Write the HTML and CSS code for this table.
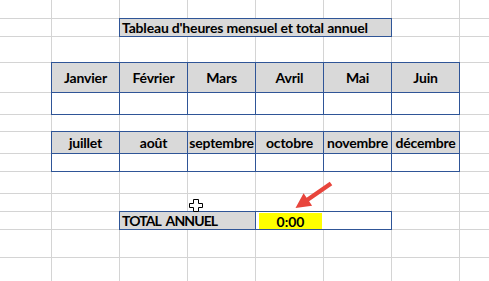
FILE: index.html
```html
<!DOCTYPE html>
<html lang="fr">
<head>
<meta charset="utf-8">
<title>Tableau d'heures</title>
<link rel="stylesheet" href="styles.css">
</head>
<body>
<div class="sheet">
  <div class="row r1"></div>
  <div class="row r2">
    <div class="cell title">Tableau d'heures mensuel et total annuel</div>
  </div>
  <div class="row r3"></div>
  <div class="row r4 months">
    <div class="cell head">Janvier</div>
    <div class="cell head">Février</div>
    <div class="cell head">Mars</div>
    <div class="cell head">Avril</div>
    <div class="cell head">Mai</div>
    <div class="cell head">Juin</div>
  </div>
  <div class="row r5 months">
    <div class="cell"></div><div class="cell"></div><div class="cell"></div>
    <div class="cell"></div><div class="cell"></div><div class="cell"></div>
  </div>
  <div class="row r6"></div>
  <div class="row r7 months">
    <div class="cell head">juillet</div>
    <div class="cell head">août</div>
    <div class="cell head">septembre</div>
    <div class="cell head">octobre</div>
    <div class="cell head">novembre</div>
    <div class="cell head">décembre</div>
  </div>
  <div class="row r8 months">
    <div class="cell"></div><div class="cell"></div><div class="cell"></div>
    <div class="cell"></div><div class="cell"></div><div class="cell"></div>
  </div>
  <div class="row r9"></div>
  <div class="row r10"></div>
  <div class="row r11">
    <div class="cell total-label">TOTAL ANNUEL</div>
    <div class="cell total-value"><span class="value">0:00</span></div>
  </div>
  <div class="row r12"></div>
  <div class="row r13"></div>

  <svg class="arrow" width="48" height="34" viewBox="288 178 48 34" aria-hidden="true">
    <polygon points="329.75,181.69 306.6,197.67 303.59,193.31 295.5,208 312.1,205.65 309.1,201.3 332.25,185.31" fill="#e8453c"/>
  </svg>
  <svg class="cursor" width="15" height="13" viewBox="0 0 15 13" aria-hidden="true">
    <polygon points="4.5,0.5 9.5,0.5 9.5,4.5 13.5,4.5 13.5,8.5 9.5,8.5 9.5,12.5 4.5,12.5 4.5,8.5 0.5,8.5 0.5,4.5 4.5,4.5" fill="#fff" stroke="#000" stroke-width="1"/>
  </svg>
</div>
</body>
</html>
```
FILE: styles.css
```css
* { box-sizing: border-box; }

html, body {
  margin: 0;
  padding: 0;
  background: #fff;
}

.sheet {
  position: relative;
  width: 489px;
  height: 281px;
  overflow: hidden;
  background: #fff linear-gradient(to right, #d4d4d4 1px, transparent 1px) 51px 0 / 68px 100% repeat-x;
  font-family: "Lato", "Liberation Sans", sans-serif;
  font-weight: 700;
  font-size: 14px;
  color: #000;
}

.row {
  display: grid;
  grid-template-columns: 52px repeat(7, 68px);
  background: linear-gradient(#d4d4d4, #d4d4d4) left bottom / 100% 1px no-repeat;
}

.r1 { height: 19px; }
.r2 { height: 18px; }
.r3 { height: 26px; }
.r4 { height: 30px; }
.r5 { height: 22px; }
.r6 { height: 17px; }
.r7 { height: 22px; }
.r8 { height: 18px; }
.r9 { height: 22px; }
.r10 { height: 18px; }
.r11 { height: 18px; }
.r12 { height: 28px; }
.r13 { height: 30px; background: none; }

.cell {
  margin: -1px 0 0 -1px;
  border: 1px solid #2f5597;
  background: #fff;
  display: flex;
  align-items: center;
  white-space: nowrap;
  min-width: 0;
}

.months > .cell:first-child { grid-column: 2; }

.head {
  background: #d9d9d9;
  justify-content: center;
  letter-spacing: -0.2px;
}

.title {
  grid-column: 3 / 7;
  background: #d9d9d9;
  padding-left: 2px;
  letter-spacing: -0.18px;
}

.total-label {
  grid-column: 3 / 5;
  background: #d9d9d9;
  padding-left: 2px;
  letter-spacing: -0.9px;
  word-spacing: 3px;
}

.total-value {
  grid-column: 5 / 7;
  align-items: flex-start;
}

.value {
  margin: 1px 0 0 3px;
  width: 63px;
  height: 16px;
  background: #ffff00;
  display: flex;
  align-items: center;
  justify-content: center;
}

.arrow {
  position: absolute;
  left: 288px;
  top: 178px;
}

.cursor {
  position: absolute;
  left: 189px;
  top: 199px;
}
```
